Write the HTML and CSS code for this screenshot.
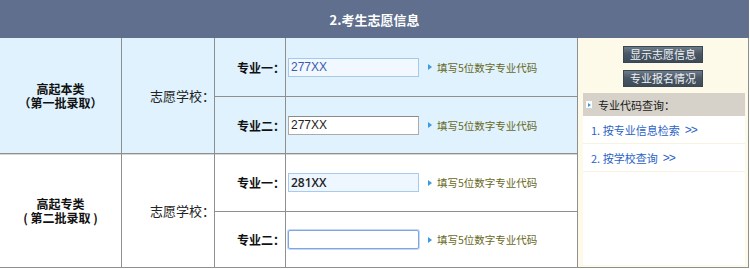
FILE: index.html
```html
<!DOCTYPE html>
<html lang="zh-CN">
<head>
<meta charset="utf-8">
<title>考生志愿信息</title>
<link rel="stylesheet" href="styles.css">
</head>
<body>
<div class="page">
  <div class="head">2.考生志愿信息</div>
  <div class="grid">
    <div class="cat blue r1">
      <div>高起本类</div>
      <div>（第一批录取）</div>
    </div>
    <div class="school blue r1">志愿学校：</div>
    <div class="lab blue">专业一：</div>
    <div class="fld blue">
      <input class="ipt ipt-a" type="text" value="277XX">
      <span class="tip"><i class="tri"></i>填写5位数字专业代码</span>
    </div>

    <aside class="side">
      <div class="btns">
        <button class="btn" type="button">显示志愿信息</button>
        <button class="btn" type="button">专业报名情况</button>
      </div>
      <div class="box">
        <div class="bar"><i class="sq"><i class="tri"></i></i>专业代码查询：</div>
        <a class="lnk" href="#">1. 按专业信息检索 <span class="gt">&gt;&gt;</span></a>
        <a class="lnk" href="#">2. 按学校查询 <span class="gt">&gt;&gt;</span></a>
      </div>
    </aside>

    <div class="lab blue">专业二：</div>
    <div class="fld blue">
      <input class="ipt ipt-b" type="text" value="277XX">
      <span class="tip"><i class="tri"></i>填写5位数字专业代码</span>
    </div>

    <div class="cat white r3">
      <div>高起专类</div>
      <div>( 第二批录取 )</div>
    </div>
    <div class="school white r3">志愿学校：</div>
    <div class="lab white top">专业一：</div>
    <div class="fld white top">
      <input class="ipt ipt-c" type="text" value="281XX">
      <span class="tip"><i class="tri"></i>填写5位数字专业代码</span>
    </div>
    <div class="lab white">专业二：</div>
    <div class="fld white">
      <input class="ipt ipt-d" type="text" value="">
      <span class="tip"><i class="tri"></i>填写5位数字专业代码</span>
    </div>
  </div>
</div>
</body>
</html>
```

FILE: styles.css
```css
html, body {
  margin: 0;
  padding: 0;
  background: #ffffff;
}

body {
  font-family: "Noto Sans CJK SC", "Liberation Sans", sans-serif;
  font-size: 12px;
  color: #222;
}

.page {
  width: 749px;
}

.head {
  height: 38px;
  background: #606f8e;
  color: #ffffff;
  font-weight: bold;
  font-size: 13px;
  display: flex;
  align-items: center;
  justify-content: center;
}

.grid {
  display: grid;
  grid-template-columns: 121px 92px 70px 291px 170px;
  grid-template-rows: 58px 56px 57px 55px;
  gap: 1px;
  background: #8f8f8f;
  border-right: 1px solid #8f8f8f;
  border-bottom: 1px solid #8f8f8f;
}

.blue { background: #dff2fd; }
.white { background: #ffffff; }

.top { box-shadow: inset 0 1px 0 #d8d8d8; }

.cat {
  grid-row: span 2;
  display: flex;
  flex-direction: column;
  align-items: center;
  justify-content: center;
  font-weight: bold;
  line-height: 14px;
  font-size: 12px;
  color: #111;
}

.cat.r3 { box-shadow: inset 0 1px 0 #d8d8d8; }

.school {
  grid-row: span 2;
  display: flex;
  align-items: center;
  justify-content: flex-start;
  white-space: nowrap;
  font-size: 13px;
  color: #222;
  padding-left: 28px;
}

.school.r3 { box-shadow: inset 0 1px 0 #d8d8d8; }

.lab {
  display: flex;
  align-items: center;
  justify-content: flex-end;
  font-weight: bold;
  color: #111;
}

.fld {
  display: flex;
  align-items: center;
  padding-left: 2px;
}

.ipt {
  box-sizing: border-box;
  width: 131px;
  height: 19px;
  margin: 0 9px 0 0;
  padding: 0 2px;
  font-family: "Liberation Sans", sans-serif;
  font-size: 12px;
  outline: none;
}

.ipt-a {
  border: 1px solid #a7c9e8;
  background: #f1f8ff;
  color: #3c5ab0;
  -webkit-text-fill-color: #3c5ab0;
}

.ipt-b {
  border: 1px solid #ababab;
  border-top-color: #8a8a8a;
  background: #ffffff;
  color: #222;
}

.ipt-c {
  border: 1px solid #a8cbec;
  background: #eef7ff;
  color: #222;
  font-family: "Open Sans", sans-serif;
  font-weight: 600;
}

.ipt-d {
  border: 1px solid #7fa6e4;
  box-shadow: 0 0 0 1px #c5d8f6;
  border-radius: 2px;
  background: #ffffff;
}

.tip {
  display: flex;
  align-items: center;
  color: #68681c;
  font-size: 10.5px;
}

.tri {
  display: inline-block;
  width: 0;
  height: 0;
  border-left: 4px solid #3c9ae0;
  border-top: 3px solid transparent;
  border-bottom: 3px solid transparent;
  margin-right: 5px;
}

.side {
  grid-column: 5;
  grid-row: 1 / span 4;
  background: #fdfaea;
  padding: 0 3px 2px 5px;
  display: flex;
  flex-direction: column;
}

.btns {
  display: flex;
  flex-direction: column;
  align-items: center;
  gap: 7px;
  padding-top: 8px;
  padding-bottom: 6px;
  padding-right: 2px;
}

.btn {
  width: 80px;
  height: 17px;
  padding: 0;
  border: 1px solid #3a4652;
  background: linear-gradient(#6e7c89, #4a5866 45%, #3d4a57);
  color: #eef2f6;
  font-family: "Noto Sans CJK SC", sans-serif;
  font-size: 11px;
  line-height: 15px;
}

.box {
  flex: 1;
  background: #ffffff;
  display: flex;
  flex-direction: column;
}

.bar {
  height: 23px;
  background: #d6d2ca;
  display: flex;
  align-items: center;
  padding-left: 3px;
  font-size: 11px;
  color: #1a1a1a;
}

.sq {
  display: inline-flex;
  align-items: center;
  justify-content: center;
  width: 6px;
  height: 7px;
  background: #ffffff;
  margin-right: 6px;
}

.sq .tri {
  margin: 0 0 0 1px;
  border-left-width: 3px;
  border-top-width: 2.5px;
  border-bottom-width: 2.5px;
}

.lnk {
  height: 27px;
  display: flex;
  align-items: center;
  padding-left: 8px;
  border-bottom: 1px solid #f8f3df;
  color: #2a62c6;
  text-decoration: none;
  font-size: 11px;
}

.gt {
  margin-left: 5px;
  font-family: "Liberation Sans", sans-serif;
  font-size: 12px;
  letter-spacing: -1px;
}
```
